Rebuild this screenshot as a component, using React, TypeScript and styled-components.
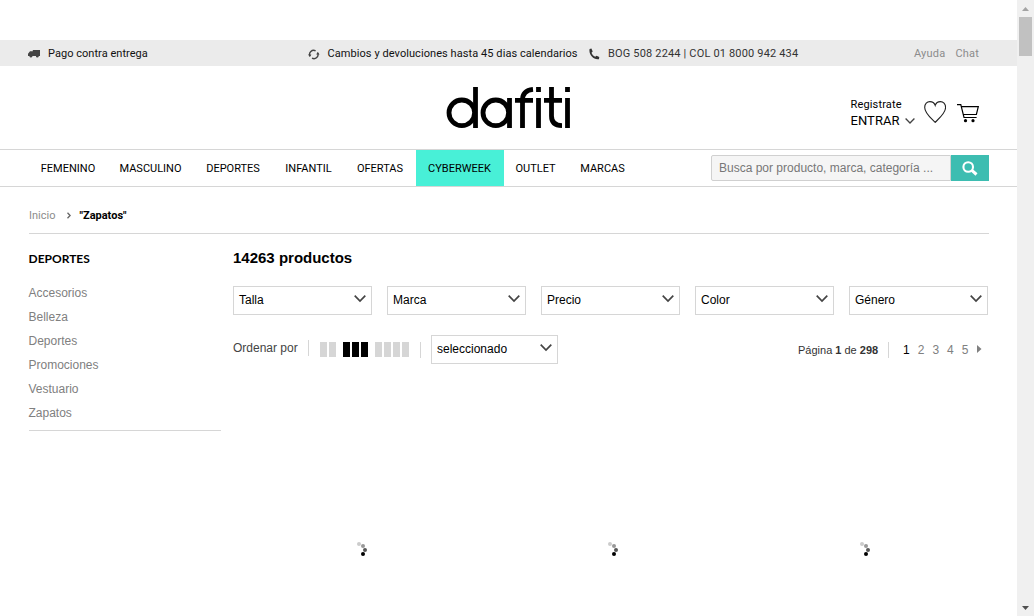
import React from 'react';
import styled, { createGlobalStyle } from 'styled-components';

const GlobalStyle = createGlobalStyle`
  * { box-sizing: border-box; }
  body { margin: 0; background: #fff; overflow: hidden; }
  ul { list-style: none; margin: 0; padding: 0; }
  svg { display: block; flex: none; }
`;

const Window = styled.div`
  display: flex;
  height: 616px;
  font-family: 'Liberation Sans', Arial, sans-serif;
  font-size: 12px;
  color: #000;
`;
const Page = styled.div`
  width: 1017px;
  padding-top: 40px;
`;
const Scrollbar = styled.div`
  width: 17px;
  background: #f0f0f0;
  display: flex;
  flex-direction: column;
  align-items: center;
`;
const ScrollArrow = styled.div`
  height: 17px;
  padding-top: 7px;
`;
const Thumb = styled.div`
  width: 13px;
  height: 39px;
  margin-bottom: auto;
  background: #c1c1c1;
`;

const InfoBar = styled.div`
  height: 26px;
  padding: 0 38px 0 28px;
  background: #ebebeb;
  display: flex;
  align-items: center;
  font-family: Roboto, sans-serif;
  font-size: 11px;
`;
const InfoItem = styled.div<{ $width: number; $gap: number; $spacing: number; $color?: string }>`
  width: ${(p) => p.$width}px;
  display: flex;
  align-items: center;
  gap: ${(p) => p.$gap}px;
  letter-spacing: ${(p) => p.$spacing}px;
  color: ${(p) => p.$color ?? '#111'};
  white-space: nowrap;

  svg {
    margin-top: 2px;
  }
`;
const HelpLinks = styled.div`
  margin-left: auto;
  display: flex;
  gap: 10px;
  letter-spacing: 0.2px;
  color: #8c8c8c;
`;

const Masthead = styled.header`
  height: 83px;
  display: flex;
  align-items: flex-start;
  padding: 20px 37px 0 446px;
`;
const Account = styled.div`
  margin-left: auto;
  padding-top: 11px;
  display: flex;
`;
const Login = styled.div`
  width: 74px;
  padding-left: 0.5px;
  font-family: Roboto, sans-serif;
  font-size: 11px;
  line-height: 15px;
  letter-spacing: 0.15px;
`;
const Enter = styled.div`
  display: flex;
  align-items: center;
  gap: 5px;
  font-size: 13px;
  line-height: 17px;
  letter-spacing: 0.05px;
`;
const HeartSlot = styled.div`
  padding-top: 4px;
  width: 33px;
`;
const CartSlot = styled.div`
  padding-top: 7px;
  width: 23px;
`;

const Nav = styled.nav`
  height: 38px;
  border-top: 1px solid #d6d6d6;
  border-bottom: 1px solid #d6d6d6;
  padding: 0 28px 0 29px;
  display: flex;
  justify-content: space-between;
`;
const NavList = styled.ul`
  display: flex;
  font-family: Roboto, sans-serif;
  font-size: 11px;
`;
const NavItem = styled.li<{ $width: number; $active?: boolean }>`
  width: ${(p) => p.$width}px;
  padding-right: 1px;
  line-height: 37px;
  height: 36px;
  text-align: center;
  background: ${(p) => (p.$active ? '#48f0d7' : 'transparent')};
`;
const Search = styled.form`
  margin-top: 5px;
  height: 26px;
  display: flex;
`;
const SearchInput = styled.div`
  width: 240px;
  padding-left: 7px;
  line-height: 24px;
  border: 1px solid #d0d0d0;
  border-radius: 2px 0 0 2px;
  background: #f5f5f5;
  color: #777;
  white-space: nowrap;
`;
const SearchButton = styled.div`
  width: 38px;
  background: #3dbdb1;
  display: flex;
  align-items: center;
  justify-content: center;
`;

const Breadcrumb = styled.div`
  height: 47px;
  margin: 0 28px 0 29px;
  padding-top: 10px;
  border-bottom: 1px solid #d6d6d6;
  display: flex;
  align-items: center;
  font-family: Roboto, sans-serif;
  font-size: 11px;
  color: #8c8c8c;
`;
const Separator = styled.span`
  width: 24px;
  padding-left: 12px;
`;
const Current = styled.b`
  color: #000;
`;

const Body = styled.div`
  display: flex;
  padding-left: 29px;
`;
const Sidebar = styled.aside`
  width: 192px;
  height: 197px;
  margin-right: 12px;
  border-bottom: 1px solid #d6d6d6;
`;
const SideTitle = styled.h2`
  margin: 17px 0 14px -0.5px;
  font-family: Lato, sans-serif;
  font-size: 12px;
  line-height: 16px;
  font-weight: 700;
`;
const SideLink = styled.li`
  margin-left: -0.5px;
  line-height: 24px;
  color: #808080;
`;

const Catalog = styled.main`
  width: 756px;
`;
const Count = styled.h1`
  margin: 15px 0 19px;
  font-size: 15px;
  line-height: 18px;
  font-weight: 700;
`;
const Filters = styled.div`
  display: flex;
  gap: 15px;
`;
const Select = styled.div<{ $width: number }>`
  width: ${(p) => p.$width}px;
  height: 29px;
  padding: 0 5px 3px;
  border: 1px solid #d6d6d6;
  display: flex;
  align-items: center;
  justify-content: space-between;
`;
const SelectValue = styled.span`
  padding-top: 2px;
`;
const Toolbar = styled.div`
  margin-top: 20px;
  height: 29px;
  display: flex;
`;
const SortLabel = styled.span`
  width: 75px;
  padding-top: 6px;
  color: #444;
`;
const Divider = styled.span<{ $top: number; $gap: number }>`
  width: 1px;
  height: 16px;
  margin: ${(p) => p.$top}px ${(p) => p.$gap}px 0 0;
  background: #d6d6d6;
`;
const GridOption = styled.div<{ $active?: boolean; $gap: number }>`
  display: flex;
  gap: 2px;
  height: 15px;
  margin: 7px ${(p) => p.$gap}px 0 0;
  color: ${(p) => (p.$active ? '#000' : '#d6d6d6')};
`;
const Bar = styled.span`
  width: 7px;
  background: currentColor;
`;
const PageInfo = styled.div`
  width: 90px;
  margin-left: auto;
  padding-top: 9px;
  font-size: 11px;
  line-height: 13px;
  color: #333;
  white-space: nowrap;
`;
const PageNumbers = styled.div`
  display: flex;
  padding-top: 8px;
  width: 86px;
  gap: 8px;
  line-height: 14px;
`;
const PageNumber = styled.span<{ $active?: boolean }>`
  width: 6.7px;
  color: ${(p) => (p.$active ? '#000' : '#808080')};
`;
const NextPage = styled.span`
  padding: 2px 0 0 1px;
`;
const Products = styled.div`
  display: grid;
  grid-template-columns: repeat(3, 251.5px);
  padding-top: 177px;
`;
const ProductCell = styled.div`
  display: flex;
  justify-content: center;
`;

const TruckIcon = () => (
  <svg width="12" height="8" viewBox="0 0 12 8" fill="#444">
    <path d="M4.8 0H12v6H0V3.8L2 1.2h2.8z" />
    <circle cx="2.9" cy="6.2" r="1.3" />
    <circle cx="9.3" cy="6.2" r="1.3" />
  </svg>
);
const ReturnIcon = () => (
  <svg width="12" height="11" viewBox="0 0 12 11" fill="none" stroke="#444" strokeWidth="1.4">
    <path d="M2 7.2A4.1 4.1 0 0 1 7.6 1.8M9.6 3.8A4.1 4.1 0 0 1 4 9.2" />
    <path d="M0 5.4h3.4L1.9 7.9zM8.2 5.6h3.4L9.7 3.1z" fill="#444" stroke="none" />
  </svg>
);
const PhoneIcon = () => (
  <svg width="11" height="12" viewBox="0 0 11 12" fill="#333">
    <path d="M.6.9L2.4.5l1.3 3-1.2 1.2C3.2 6.6 4.4 7.9 6.2 8.8l1.3-1 2.8 1.3-.4 2.1C4.4 12.2-.6 6.4.6.9z" />
  </svg>
);
const Logo = () => (
  <svg width="126" height="44" viewBox="0 0 126 44" fill="none" stroke="#000" strokeWidth="4.8" role="img" aria-label="dafiti">
    <circle cx="15.8" cy="26.8" r="12.8" />
    <path d="M29.5 1v41" />
    <circle cx="49.8" cy="26.8" r="12.8" />
    <path d="M63.5 12v30M76.5 42V14C76.5 8 79.5 4.2 87 3.4M69 14.4h18" />
    <path d="M92.5 12v30M92.5 1v5M105.5 1v29C105.5 36 108.5 39.5 116 39.6M98 14.4h18" />
    <path d="M121.5 12v30M121.5 1v5" />
  </svg>
);
const Chevron = ({ size = 12, stroke = 1.7 }: { size?: number; stroke?: number }) => (
  <svg width={size} height={size * 0.6} viewBox="0 0 12 7.2" fill="none" stroke="#444" strokeWidth={stroke}>
    <path d="M.7.7L6 6 11.3.7" />
  </svg>
);
const HeartIcon = () => (
  <svg width="22" height="22" viewBox="0 0 22 22" fill="none" stroke="#222" strokeWidth="1.1">
    <path d="M11.2 21.3C8 18 .7 12.4.7 6.4.7 3 3 .6 5.9.6 8.5.6 10.4 2 11.2 4.4 12 2 13.8.6 16.4.6 19.2.6 21.6 3 21.6 6.4 21.6 12.4 14.2 18 11.2 21.3z" />
  </svg>
);
const CartIcon = () => (
  <svg width="22" height="19" viewBox="0 0 22 19" fill="none" stroke="#000" strokeWidth="1.2">
    <path d="M0 .7h3.8L7 13.5h12.6M4.3 2.7h17L19.4 10.5H6.2" />
    <circle cx="8.5" cy="16.7" r="1.6" fill="#000" stroke="none" />
    <circle cx="16" cy="16.7" r="1.6" fill="#000" stroke="none" />
  </svg>
);
const SearchIcon = () => (
  <svg width="16" height="15" viewBox="0 0 16 15" fill="none" stroke="#fff" strokeWidth="2.1">
    <circle cx="6.2" cy="6" r="4.8" />
    <path d="M9.6 9.2l4.9 4.3" strokeWidth="3" />
  </svg>
);
const Spinner = () => (
  <svg width="16" height="16" viewBox="0 0 16 16">
    <circle cx="8" cy="3" r="2" fill="#ccc" />
    <circle cx="12" cy="5" r="2" fill="#999" />
    <circle cx="14" cy="9" r="2" fill="#555" />
    <circle cx="12" cy="13" r="2" fill="#000" />
  </svg>
);

const navigation = [
  { label: 'FEMENINO', width: 79 },
  { label: 'MASCULINO', width: 86 },
  { label: 'DEPORTES', width: 79 },
  { label: 'INFANTIL', width: 72 },
  { label: 'OFERTAS', width: 71 },
  { label: 'CYBERWEEK', width: 88, active: true },
  { label: 'OUTLET', width: 64 },
  { label: 'MARCAS', width: 70 },
];
const categories = ['Accesorios', 'Belleza', 'Deportes', 'Promociones', 'Vestuario', 'Zapatos'];
const filters = ['Talla', 'Marca', 'Precio', 'Color', 'Género'];
const layouts = [
  { bars: 2, gap: 7 },
  { bars: 3, gap: 7, active: true },
  { bars: 4, gap: 11 },
];

export default function App() {
  return (
    <Window>
      <GlobalStyle />
      <Page>
        <InfoBar>
          <InfoItem $width={280} $gap={8} $spacing={0.04}><TruckIcon />Pago contra entrega</InfoItem>
          <InfoItem $width={281} $gap={7.5} $spacing={0.07}><ReturnIcon />Cambios y devoluciones hasta 45 dias calendarios</InfoItem>
          <InfoItem $width={230} $gap={8} $spacing={0.17} $color="#333"><PhoneIcon />BOG 508 2244 | COL 01 8000 942 434</InfoItem>
          <HelpLinks><span>Ayuda</span><span>Chat</span></HelpLinks>
        </InfoBar>
        <Masthead>
          <Logo />
          <Account>
            <Login>
              Registrate
              <Enter>ENTRAR <Chevron size={10} stroke={1.6} /></Enter>
            </Login>
            <HeartSlot><HeartIcon /></HeartSlot>
            <CartSlot><CartIcon /></CartSlot>
          </Account>
        </Masthead>
        <Nav>
          <NavList>
            {navigation.map((n) => (
              <NavItem key={n.label} $width={n.width} $active={n.active}>{n.label}</NavItem>
            ))}
          </NavList>
          <Search>
            <SearchInput>Busca por producto, marca, categoría ...</SearchInput>
            <SearchButton><SearchIcon /></SearchButton>
          </Search>
        </Nav>
        <Breadcrumb>
          Inicio
          <Separator>
            <svg width="4" height="7" viewBox="0 0 4 7" fill="none" stroke="#666" strokeWidth="1.3"><path d="M.5.8L3.1 3.5.5 6.2" /></svg>
          </Separator>
          <Current>"Zapatos"</Current>
        </Breadcrumb>
        <Body>
          <Sidebar>
            <SideTitle>DEPORTES</SideTitle>
            <ul>{categories.map((c) => <SideLink key={c}>{c}</SideLink>)}</ul>
          </Sidebar>
          <Catalog>
            <Count>14263 productos</Count>
            <Filters>
              {filters.map((f) => <Select key={f} $width={139}><SelectValue>{f}</SelectValue><Chevron /></Select>)}
            </Filters>
            <Toolbar>
              <SortLabel>Ordenar por</SortLabel>
              <Divider $top={5} $gap={11} />
              {layouts.map((l) => (
                <GridOption key={l.bars} $active={l.active} $gap={l.gap}>
                  {Array.from({ length: l.bars }, (_, i) => <Bar key={i} />)}
                </GridOption>
              ))}
              <Divider $top={7} $gap={10} />
              <Select $width={127}><SelectValue>seleccionado</SelectValue><Chevron /></Select>
              <PageInfo>Página <b>1</b> de <b>298</b></PageInfo>
              <Divider $top={7} $gap={14} />
              <PageNumbers>
                {[1, 2, 3, 4, 5].map((n) => <PageNumber key={n} $active={n === 1}>{n}</PageNumber>)}
                <NextPage>
                  <svg width="5" height="8" viewBox="0 0 5 8" fill="#808080"><path d="M0 0l4.5 4L0 8z" /></svg>
                </NextPage>
              </PageNumbers>
            </Toolbar>
            <Products>
              {[0, 1, 2].map((i) => <ProductCell key={i}><Spinner /></ProductCell>)}
            </Products>
          </Catalog>
        </Body>
      </Page>
      <Scrollbar>
        <ScrollArrow><svg width="7" height="4" viewBox="0 0 7 4" fill="#a3a3a3"><path d="M0 4L3.5 0 7 4z" /></svg></ScrollArrow>
        <Thumb />
        <ScrollArrow><svg width="7" height="4" viewBox="0 0 7 4" fill="#505050"><path d="M0 0l3.5 4L7 0z" /></svg></ScrollArrow>
      </Scrollbar>
    </Window>
  );
}
